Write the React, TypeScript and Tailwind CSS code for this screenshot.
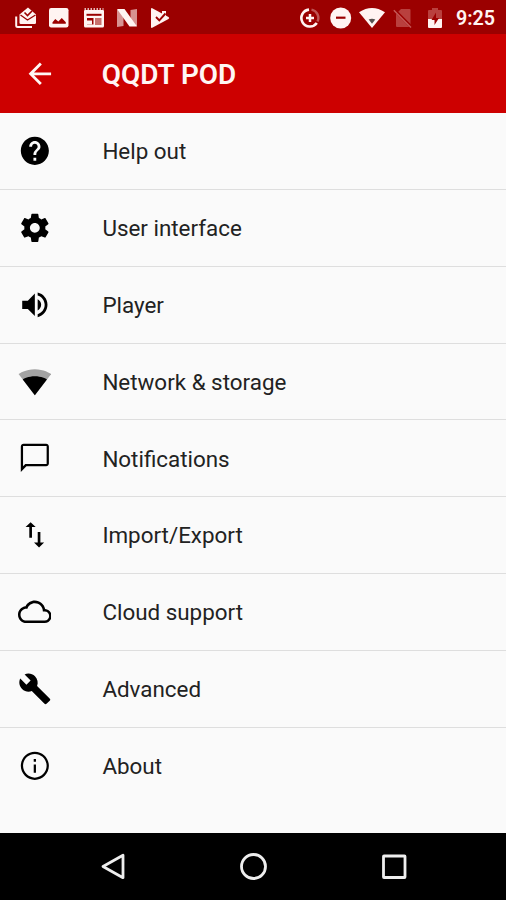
import React from 'react';

const Icon = ({ children, className = 'h-[33.7px] w-[33.7px]' }: { children: React.ReactNode; className?: string }) => (
  <svg viewBox="0 0 24 24" fill="currentColor" className={className}>
    {children}
  </svg>
);

const items = [
  {
    label: 'Help out',
    icon: <path d="M12 2C6.48 2 2 6.48 2 12s4.48 10 10 10 10-4.48 10-10S17.52 2 12 2zm1 17h-2v-2h2v2zm2.07-7.75l-.9.92C13.45 12.9 13 13.5 13 15h-2v-.5c0-1.1.45-2.1 1.17-2.83l1.24-1.26c.37-.36.59-.86.59-1.41 0-1.1-.9-2-2-2s-2 .9-2 2H8c0-2.21 1.79-4 4-4s4 1.79 4 4c0 .88-.36 1.68-.93 2.25z" />,
  },
  {
    label: 'User interface',
    icon: <path d="M19.43 12.98c.04-.32.07-.64.07-.98s-.03-.66-.07-.98l2.11-1.65c.19-.15.24-.42.12-.64l-2-3.46c-.12-.22-.39-.3-.61-.22l-2.49 1c-.52-.4-1.08-.73-1.69-.98l-.38-2.65C14.46 2.18 14.25 2 14 2h-4c-.25 0-.46.18-.49.42l-.38 2.65c-.61.25-1.17.59-1.69.98l-2.49-1c-.23-.09-.49 0-.61.22l-2 3.46c-.13.22-.07.49.12.64l2.11 1.65c-.04.32-.07.65-.07.98s.03.66.07.98l-2.11 1.65c-.19.15-.24.42-.12.64l2 3.46c.12.22.39.3.61.22l2.49-1c.52.4 1.08.73 1.69.98l.38 2.65c.03.24.24.42.49.42h4c.25 0 .46-.18.49-.42l.38-2.65c.61-.25 1.17-.59 1.69-.98l2.49 1c.23.09.49 0 .61-.22l2-3.46c.12-.22.07-.49-.12-.64l-2.11-1.65zM12 15.5c-1.93 0-3.5-1.57-3.5-3.5s1.57-3.5 3.5-3.5 3.5 1.57 3.5 3.5-1.57 3.5-3.5 3.5z" />,
  },
  {
    label: 'Player',
    icon: <path d="M3 9v6h4l5 5V4L7 9H3zm13.5 3c0-1.77-1.02-3.29-2.5-4.03v8.05c1.48-.73 2.5-2.25 2.5-4.02zM14 3.23v2.06c2.89.86 5 3.54 5 6.71s-2.11 5.85-5 6.71v2.06c4.01-.91 7-4.49 7-8.77s-2.99-7.86-7-8.77z" />,
  },
  {
    label: 'Network & storage',
    icon: (
      <>
        <path fillOpacity=".35" d="M12 21.5L23.6 6.5C23.2 6.1 18.6 3 12 3S.8 6.1.4 6.5L12 21.5z" />
        <path d="M12 21.5L20.6 10.3C19.7 9.7 16.6 8 12 8S4.300 9.7 3.4 10.3L12 21.5z" />
      </>
    ),
  },
  {
    label: 'Notifications',
    icon: <path d="M20 2H4c-1.1 0-2 .9-2 2v18l4-4h14c1.1 0 2-.9 2-2V4c0-1.1-.9-2-2-2zm.4 14.4H5.2L3.600 18V3.600h16.800v12.800z" />,
  },
  {
    label: 'Import/Export',
    icon: <path d="M9 3L5.4 6.5H8.050V14h1.9V6.5h2.650L9 3zm6.950 14.5V10h-1.9v7.5h-2.650L15 21l3.600-3.5h-2.650z" />,
  },
  {
    label: 'Cloud support',
    icon: <path d="M19.35 10.04C18.67 6.59 15.64 4 12 4 9.11 4 6.6 5.64 5.35 8.04 2.34 8.36 0 10.91 0 14c0 3.31 2.69 6 6 6h13c2.76 0 5-2.24 5-5 0-2.64-2.05-4.78-4.65-4.96zM19 18.2H6c-2.32 0-4.2-1.88-4.2-4.2S3.68 9.8 6 9.8h.71C7.37 7.49 9.48 5.8 12 5.8c3.04 0 5.7 2.46 5.7 5.7v.3H19c1.77 0 3.2 1.43 3.2 3.2s-1.43 3.2-3.2 3.2z" />,
  },
  {
    label: 'Advanced',
    icon: <path d="M22.7 19l-9.1-9.1c.9-2.3.4-5-1.5-6.9-2-2-5-2.4-7.4-1.3L9 6 6 9 1.6 4.7C.4 7.1.9 10.1 2.9 12.1c1.9 1.9 4.6 2.4 6.9 1.5l9.1 9.1c.4.4 1 .4 1.4 0l2.3-2.3c.5-.4.5-1.1.1-1.4z" />,
  },
  {
    label: 'About',
    icon: <path d="M11.2 17h1.6v-6h-1.6v6zm.8-15C6.48 2 2 6.48 2 12s4.48 10 10 10 10-4.48 10-10S17.52 2 12 2zm0 18.4c-4.63 0-8.4-3.77-8.4-8.4s3.77-8.4 8.4-8.4 8.4 3.77 8.4 8.4-3.77 8.4-8.4 8.4zM11.2 9h1.6V7.2h-1.6V9z" />,
  },
];

const StatusBar = () => (
  <div className="flex h-[34px] shrink-0 items-center justify-between bg-[#9b0000] pt-px pr-[11px] pl-[15px] text-[#fff4f2]">
    <div className="flex items-center gap-3">
      <svg viewBox="0 0 22 22" className="h-[22px] w-[22px]" fill="none">
        <path d="M1.2 9.5v9q0 1.5 1.5 1.5H17" stroke="currentColor" strokeWidth="2" />
        <path d="M4.5 7.5L13 .5l8 7v8q0 1.5-1.3 1.5H5.8q-1.3 0-1.3-1.5z" fill="currentColor" />
        <path d="M5.5 8l7 5 8-5" stroke="#9b0000" strokeWidth="1.3" />
        <path d="M9.5 5.5l3 3 4.5-4.5" stroke="#9b0000" strokeWidth="1.6" />
      </svg>
      <svg viewBox="0 0 20 20" className="h-5 w-5">
        <rect width="19.5" height="19.5" rx="2.2" fill="currentColor" />
        <path d="M3.5 15.7v-1.5l2.8-3.2 3 2.5 3.5-3.5 4 4.2v1.5z" fill="#9b0000" />
      </svg>
      <svg viewBox="0 0 22 20" className="ml-0.5 h-5 w-[22px]">
        <path d="M2 2h18q1 0 1 1v15q0 1.5-1.5 1.5h-17Q1 19.5 1 18V3Q1 2 2 2z" fill="currentColor" />
        <path d="M1.5 1h19" stroke="currentColor" strokeWidth="1.5" strokeDasharray="1.5 1.5" />
        <path d="M3.5 6.800h15" stroke="#9b0000" strokeWidth="2" />
        <path d="M4 10h6.500v6.500H4z" fill="#9b0000" />
        <path d="M4 12.500h5v4H4z" fill="currentColor" />
        <path d="M12 10h6.5v7H12z" fill="#c9716e" />
      </svg>
      <svg viewBox="0 0 22 20" className="-ml-px h-5 w-[22px]" fill="currentColor">
        <path d="M1 2h6.5v16L1 19zM14.5 2l6.5-1v17h-6.5z" opacity=".6" />
        <path d="M1 1h7.5L21 18.5h-7.5z" />
      </svg>
      <svg viewBox="0 0 20 22" className="h-[22px] w-5">
        <path d="M1 2.3Q1 .5 2.7 1.4L18.5 10q1.5 1 0 2L2.7 20.6Q1 21.5 1 19.7z" fill="currentColor" />
        <path d="M12 4h4v6h-4z" fill="currentColor" />
        <path d="M6 10l3.3 3.3L15.5 6.5" fill="none" stroke="#9b0000" strokeWidth="1.9" />
      </svg>
    </div>
    <div className="flex items-center">
      <svg viewBox="0 0 20 20" className="h-5 w-5" fill="none" stroke="currentColor">
        <path d="M9 1.6a8.5 8.5 0 1 0 7.8 13.4" strokeWidth="2.6" />
        <path d="M11.5 1.6a8.5 8.5 0 0 1 6 12" strokeWidth="2.4" opacity=".35" />
        <path d="M10 6v8M6 10h8" strokeWidth="2.5" />
      </svg>
      <svg viewBox="0 0 22 22" className="ml-[10px] h-[22px] w-[22px]">
        <circle cx="10.7" cy="11" r="10.5" fill="currentColor" />
        <path d="M6 10.7h9.5" stroke="#9b0000" strokeWidth="2.2" />
      </svg>
      <svg viewBox="0 0 26 20" className="ml-[7px] h-5 w-[26px]">
        <path d="M0 4.3Q13-4.3 26 4.3L13 20z" fill="currentColor" />
        <path d="M9.7 11.5q3.3-1.6 6.6 0L13 15.8z" fill="#56514f" />
      </svg>
      <svg viewBox="0 0 20 20" className="ml-[8px] h-5 w-5">
        <path d="M8 1h8.5q1 0 1 1v16q0 1-1 1H4q-1 0-1-1V6z" fill="#b9403e" />
        <path d="M1 1.5L19 19.5" stroke="#9b0000" strokeWidth="3" />
        <path d="M.8 2.2L18 19.4" stroke="#c65a58" strokeWidth="1.4" />
      </svg>
      <svg viewBox="0 0 16 22" className="ml-[14px] h-[22px] w-4">
        <path d="M5 1h6v2h3q1 0 1 1v9H1V4q0-1 1-1h3z" fill="#b9403e" />
        <path d="M1 12h14v8q0 1-1 1H2q-1 0-1-1z" fill="currentColor" />
        <path d="M9 5.5L4.5 13h3v5L12 11H9z" fill="#9b0000" />
      </svg>
      <span className="ml-[13px] w-[39px] pt-[2px] text-[19.7px] leading-none font-semibold">9:25</span>
    </div>
  </div>
);

const App = () => {
  return (
    <div className="flex h-[900px] w-[506px] flex-col overflow-hidden bg-[#fafafa] font-[Roboto,sans-serif]">
      <StatusBar />
      <header className="flex h-[79px] shrink-0 items-center bg-[#cd0000] text-[#fff6f4]">
        <button className="ml-[23px] flex">
          <Icon>
            <path d="M20 11H7.83l5.59-5.59L12 4l-8 8 8 8 1.41-1.41L7.83 13H20v-2z" />
          </Icon>
        </button>
        <h1 className="ml-[45px] pt-[3px] text-[27.9px] leading-none font-semibold">QQDT POD</h1>
      </header>
      <ul className="flex-1">
        {items.map((item) => (
          <li key={item.label} className="flex h-[76.85px] items-center border-b border-[#dedede] pl-[17.7px] text-black last:border-transparent">
            <Icon>{item.icon}</Icon>
            <span className="ml-[51px] pt-px text-[22.4px] leading-none text-[#222]">{item.label}</span>
          </li>
        ))}
      </ul>
      <nav className="flex h-[67px] shrink-0 items-center justify-between bg-black px-[99px] text-[#eee]">
        <svg viewBox="0 0 28 28" className="h-7 w-7" fill="none" stroke="currentColor" strokeWidth="2.8">
          <path d="M24 2.3v22.4L4 13.5z" strokeLinejoin="round" />
        </svg>
        <svg viewBox="0 0 28 28" className="h-7 w-7" fill="none" stroke="currentColor" strokeWidth="2.8">
          <circle cx="14.5" cy="13.5" r="12" />
        </svg>
        <svg viewBox="0 0 28 28" className="h-7 w-7" fill="none" stroke="currentColor" strokeWidth="2.8">
          <rect x="4.5" y="3" width="21.5" height="21.5" rx=".5" />
        </svg>
      </nav>
    </div>
  );
};

export default App;
